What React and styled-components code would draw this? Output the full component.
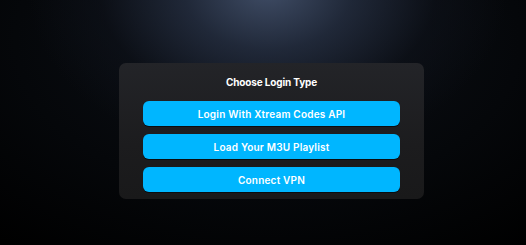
import React from "react";
import styled, { createGlobalStyle } from "styled-components";

const Global = createGlobalStyle`
  html, body { margin: 0; padding: 0; height: 100%; }
  body { background: #000; font-family: Inter, "DejaVu Sans", sans-serif; }
  #root { height: 100%; }
`;

const Page = styled.div`
  height: 245px;
  width: 526px;
  box-sizing: border-box;
  padding: 63px 0 0 17px;
  display: flex;
  justify-content: center;
  align-items: flex-start;
  background:
    radial-gradient(ellipse 240px 170px at 268px -10px, rgba(66, 80, 106, 0.95) 0%, rgba(40, 50, 70, 0.72) 35%, rgba(15, 19, 28, 0.5) 70%, rgba(0, 0, 0, 0) 100%),
    radial-gradient(ellipse 420px 260px at 268px 40px, #0d1118 0%, #05070a 60%, #000 100%);
`;

const Panel = styled.section`
  width: 305px;
  height: 136px;
  box-sizing: border-box;
  border-radius: 7px;
  background: linear-gradient(180deg, #232428 0%, #1c1c1e 60%, #19191a 100%);
  padding: 13px 24px 0;
  display: flex;
  flex-direction: column;
`;

const Title = styled.h2`
  margin: 0 0 13px;
  height: 12px;
  line-height: 12px;
  text-align: center;
  color: #fff;
  font-family: Inter, sans-serif;
  font-weight: 700;
  font-size: 10px;
  letter-spacing: -0.15px;
`;

const Buttons = styled.div`
  display: flex;
  flex-direction: column;
  gap: 8px;
`;

const Button = styled.button`
  height: 25px;
  width: 100%;
  border: none;
  border-radius: 6px;
  background: #00b6ff;
  box-shadow: 0 1px 0 #0a0d10;
  color: #fff;
  font-family: Inter, sans-serif;
  font-weight: 600;
  font-size: 10px;
  letter-spacing: 0.2px;
  cursor: pointer;
  padding: 0;
`;

const items = ["Login With Xtream Codes API", "Load Your M3U Playlist", "Connect VPN"];

export default function App() {
  return (
    <>
      <Global />
      <Page>
        <Panel>
          <Title>Choose Login Type</Title>
          <Buttons>
            {items.map((t) => (
              <Button key={t}>{t}</Button>
            ))}
          </Buttons>
        </Panel>
      </Page>
    </>
  );
}
